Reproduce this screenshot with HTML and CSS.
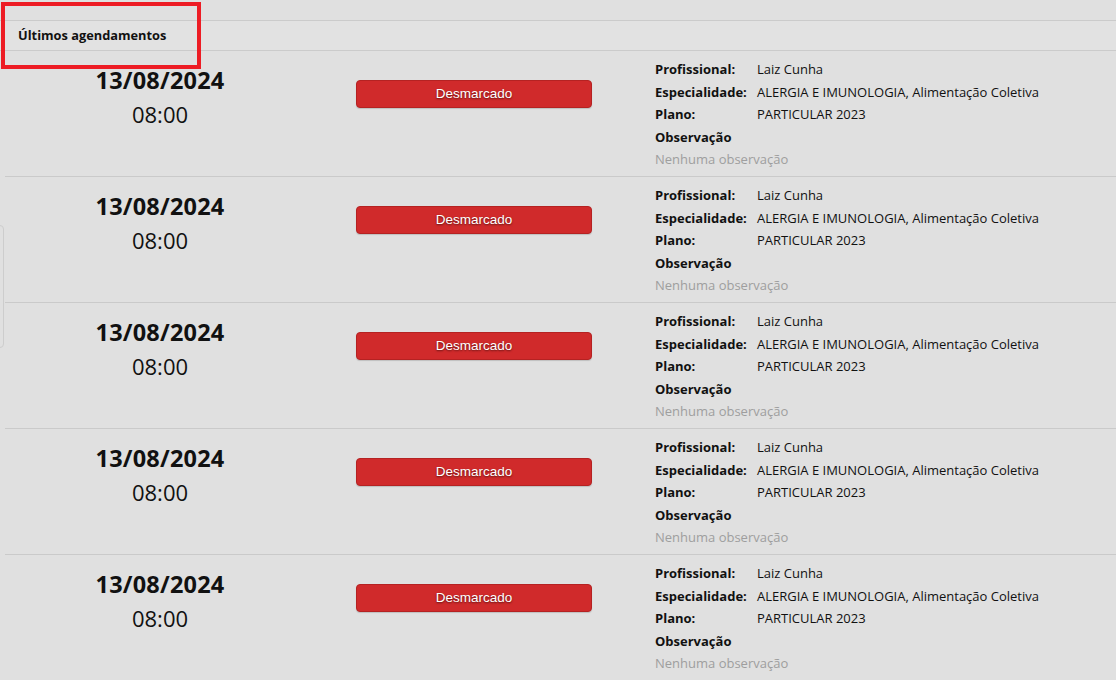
FILE: index.html
```html
<!DOCTYPE html>
<html lang="pt-BR">
<head>
<meta charset="utf-8">
<title>Últimos agendamentos</title>
<link rel="stylesheet" href="styles.css">
</head>
<body>
<div class="side-tab"></div>
<div class="highlight"></div>
<section class="panel">
  <header class="panel-header">Últimos agendamentos</header>
  <ul class="list">
    <li class="row">
      <div class="when"><div class="date">13/08/2024</div><div class="time">08:00</div></div>
      <div class="status"><span class="badge">Desmarcado</span></div>
      <dl class="details">
        <dt>Profissional:</dt><dd>Laiz Cunha</dd>
        <dt>Especialidade:</dt><dd>ALERGIA E IMUNOLOGIA, Alimentação Coletiva</dd>
        <dt>Plano:</dt><dd>PARTICULAR 2023</dd>
        <dt class="full">Observação</dt>
        <dd class="full muted">Nenhuma observação</dd>
      </dl>
    </li>
    <li class="row">
      <div class="when"><div class="date">13/08/2024</div><div class="time">08:00</div></div>
      <div class="status"><span class="badge">Desmarcado</span></div>
      <dl class="details">
        <dt>Profissional:</dt><dd>Laiz Cunha</dd>
        <dt>Especialidade:</dt><dd>ALERGIA E IMUNOLOGIA, Alimentação Coletiva</dd>
        <dt>Plano:</dt><dd>PARTICULAR 2023</dd>
        <dt class="full">Observação</dt>
        <dd class="full muted">Nenhuma observação</dd>
      </dl>
    </li>
    <li class="row">
      <div class="when"><div class="date">13/08/2024</div><div class="time">08:00</div></div>
      <div class="status"><span class="badge">Desmarcado</span></div>
      <dl class="details">
        <dt>Profissional:</dt><dd>Laiz Cunha</dd>
        <dt>Especialidade:</dt><dd>ALERGIA E IMUNOLOGIA, Alimentação Coletiva</dd>
        <dt>Plano:</dt><dd>PARTICULAR 2023</dd>
        <dt class="full">Observação</dt>
        <dd class="full muted">Nenhuma observação</dd>
      </dl>
    </li>
    <li class="row">
      <div class="when"><div class="date">13/08/2024</div><div class="time">08:00</div></div>
      <div class="status"><span class="badge">Desmarcado</span></div>
      <dl class="details">
        <dt>Profissional:</dt><dd>Laiz Cunha</dd>
        <dt>Especialidade:</dt><dd>ALERGIA E IMUNOLOGIA, Alimentação Coletiva</dd>
        <dt>Plano:</dt><dd>PARTICULAR 2023</dd>
        <dt class="full">Observação</dt>
        <dd class="full muted">Nenhuma observação</dd>
      </dl>
    </li>
    <li class="row">
      <div class="when"><div class="date">13/08/2024</div><div class="time">08:00</div></div>
      <div class="status"><span class="badge">Desmarcado</span></div>
      <dl class="details">
        <dt>Profissional:</dt><dd>Laiz Cunha</dd>
        <dt>Especialidade:</dt><dd>ALERGIA E IMUNOLOGIA, Alimentação Coletiva</dd>
        <dt>Plano:</dt><dd>PARTICULAR 2023</dd>
        <dt class="full">Observação</dt>
        <dd class="full muted">Nenhuma observação</dd>
      </dl>
    </li>
  </ul>
</section>
</body>
</html>
```

FILE: styles.css
```css
html, body {
  margin: 0;
  padding: 0;
}
body {
  background: #e0e0e0;
  font-family: "Segoe UI", "Open Sans", "Noto Sans", sans-serif;
  color: #111;
  overflow: hidden;
  height: 680px;
}
.side-tab {
  position: absolute;
  left: -4px;
  top: 225px;
  width: 6px;
  height: 121px;
  border: 1px solid #cdcdcd;
  border-radius: 4px;
}
.highlight {
  position: absolute;
  left: 1px;
  top: 2px;
  width: 192px;
  height: 59px;
  border: 4px solid #ed1c24;
  pointer-events: none;
}
.panel {
  padding-top: 20px;
}
.panel-header {
  background: #e2e2e2;
  border-top: 1px solid #cbcbcb;
  border-bottom: 1px solid #cbcbcb;
  height: 29px;
  line-height: 29px;
  padding-left: 18px;
  font-size: 12.8px;
  font-weight: 700;
}
.list {
  list-style: none;
  margin: 0 0 0 5px;
  padding: 0;
}
.row {
  display: grid;
  grid-template-columns: 310px 340px 1fr;
  padding: 7px 0 5.5px;
  border-bottom: 1px solid #cacaca;
}
.when {
  text-align: center;
  padding-top: 7px;
}
.date {
  font-size: 23.5px;
  font-weight: 700;
  line-height: 31px;
  letter-spacing: 0.2px;
}
.time {
  font-size: 22px;
  line-height: 36px;
}
.status {
  padding: 22px 0 0 41px;
}
.badge {
  display: block;
  width: 234px;
  height: 26px;
  line-height: 26px;
  box-sizing: content-box;
  background: #d02a2b;
  border: 1px solid #b52222;
  border-radius: 4px;
  color: #fff;
  text-align: center;
  font-family: "Liberation Sans", Arial, sans-serif;
  font-size: 13.5px;
  text-shadow: 0 1px 2px rgba(0, 0, 0, 0.55);
  box-shadow: 0 1px 1px rgba(0, 0, 0, 0.15);
}
.details {
  display: grid;
  grid-template-columns: 102px 1fr;
  margin: 0;
  padding-left: 0;
  font-size: 13px;
  line-height: 22.5px;
}
.details dt {
  font-weight: 700;
  white-space: nowrap;
}
.details dd {
  margin: 0;
  white-space: nowrap;
}
.details .full {
  grid-column: 1 / -1;
}
.details .muted {
  color: #9e9e9e;
}
```
